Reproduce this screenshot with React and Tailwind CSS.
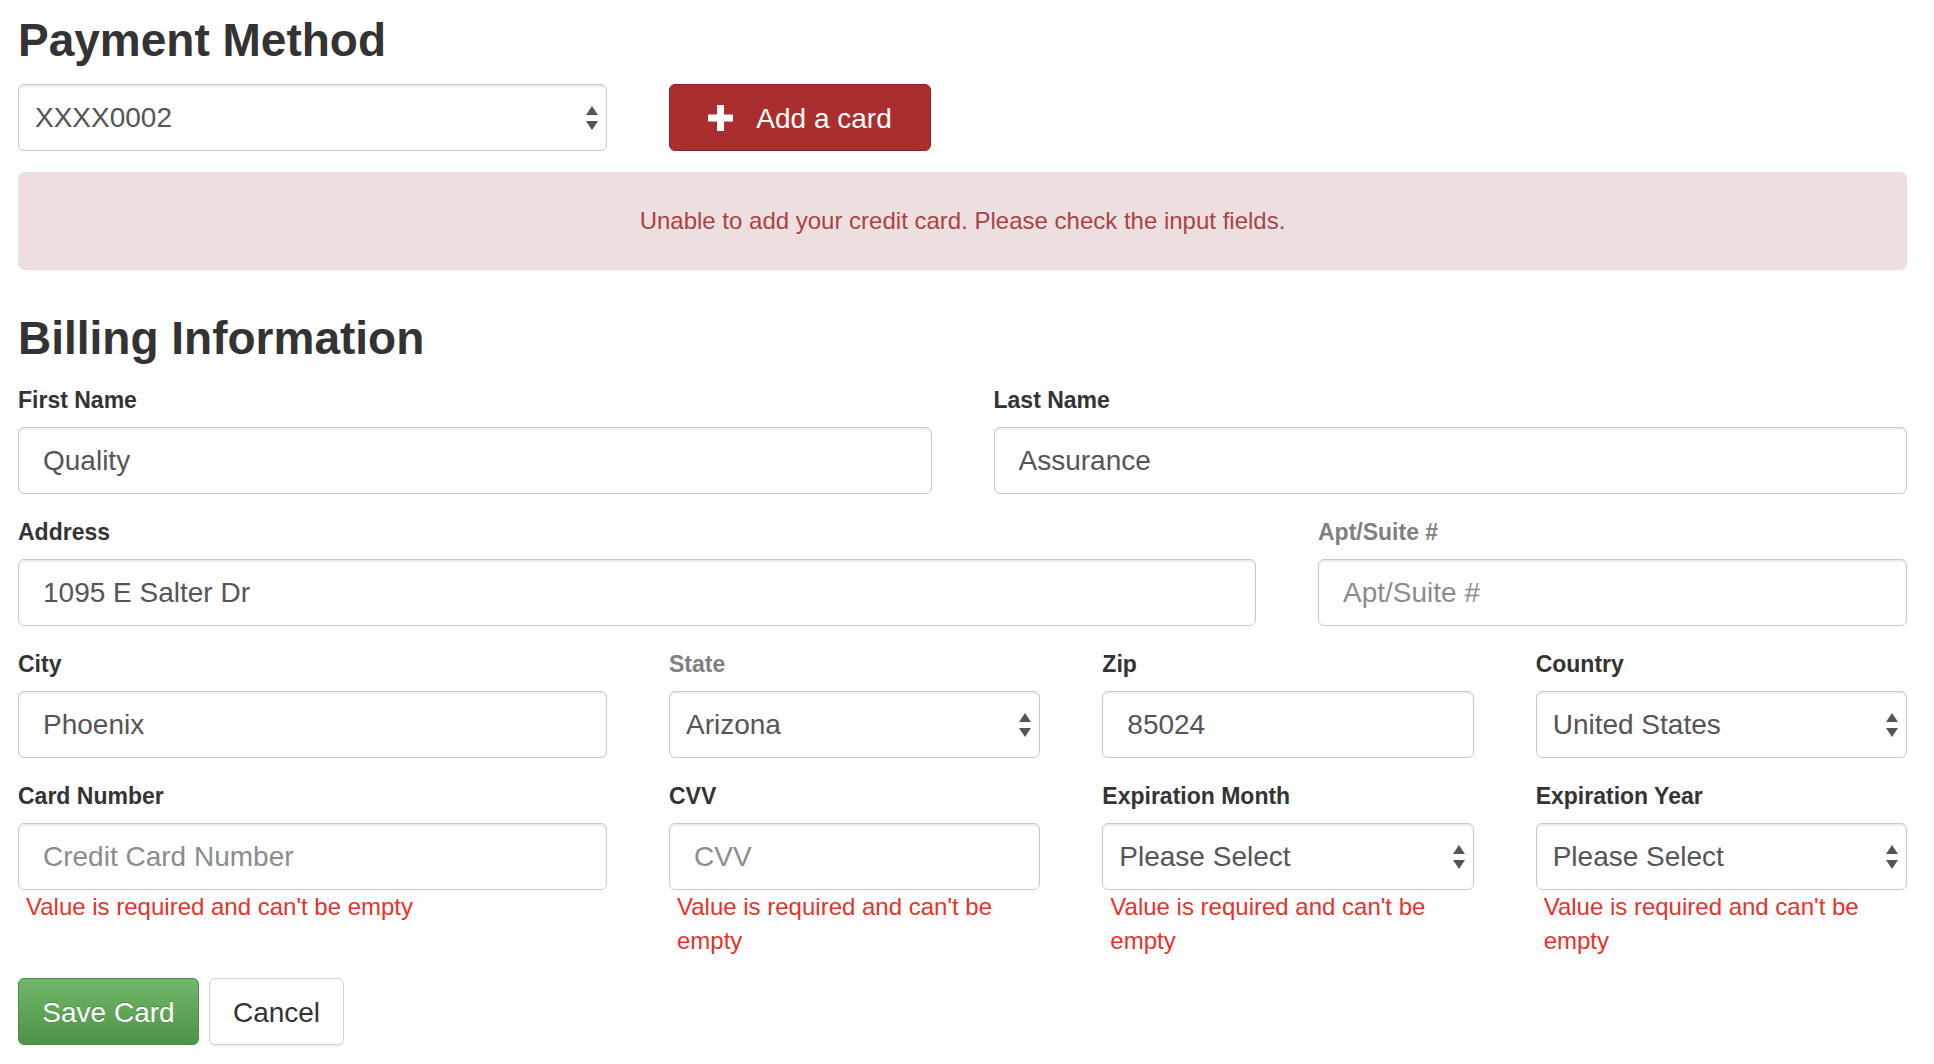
import React from "react";

const FieldLabel = ({ children, muted }) => (
  <label
    className={`mb-[15px] block h-[23px] text-[23px] font-bold leading-none ${
      muted ? "text-[#808080]" : "text-[#333]"
    }`}
  >
    {children}
  </label>
);

const TextInput = ({ value, placeholder }) => (
  <input
    type="text"
    defaultValue={value}
    placeholder={placeholder}
    className="block h-[67px] w-full rounded-[6px] border border-[#c9c9c9] bg-white px-[24px] pt-[1px] text-[28px] text-[#555] shadow-[inset_0_2px_2px_rgba(0,0,0,0.08)] outline-none placeholder:text-[#8c8c8c]"
  />
);

const Arrows = () => (
  <svg
    width="12"
    height="24"
    viewBox="0 0 12 24"
    className="pointer-events-none absolute right-[9px] top-1/2 -translate-y-1/2"
  >
    <path d="M0 9 L6 0 L12 9 Z" fill="#555" />
    <path d="M0 15 L12 15 L6 24 Z" fill="#555" />
  </svg>
);

const SelectInput = ({ value }) => (
  <div className="relative">
    <select
      defaultValue={value}
      className="block h-[67px] w-full appearance-none rounded-[6px] border border-[#c9c9c9] bg-white pl-[16px] pr-[30px] pt-[1px] text-[28px] text-[#555] shadow-[inset_0_2px_2px_rgba(0,0,0,0.08)] outline-none"
    >
      <option value={value}>{value}</option>
    </select>
    <Arrows />
  </div>
);

const FieldError = ({ children }) => (
  <p className="pl-[8px] text-[24px] leading-[34px] text-[#e8322a]">
    {children}
  </p>
);

const REQUIRED = "Value is required and can't be empty";

const App = () => {
  return (
    <div className="min-h-screen bg-white font-['Liberation_Sans',Arial,sans-serif]">
      <div className="ml-[18px] w-[1889px] pt-[17px]">
        <h2 className="h-[46px] text-[46px] font-bold leading-none text-[#333]">
          Payment Method
        </h2>

        <div className="mt-[21px] flex items-center gap-[62px]">
          <div className="w-[589px]">
            <SelectInput value="XXXX0002" />
          </div>
          <button className="flex h-[67px] w-[262px] items-center justify-center gap-[23px] rounded-[6px] border border-[#8d2424] bg-[#ab2e2e] pt-[2px] text-[28px] text-white">
            <svg width="25" height="26" viewBox="0 0 25 26" className="-mt-[2px]">
              <rect x="9" y="0" width="7" height="26" fill="#fff" />
              <rect x="0" y="9.5" width="25" height="7" fill="#fff" />
            </svg>
            Add a card
          </button>
        </div>

        <div className="mt-[21px] flex h-[98px] items-center justify-center rounded-[7px] bg-[#eddfdf] text-[24px] text-[#a94442]">
          Unable to add your credit card. Please check the input fields.
        </div>

        <h2 className="mt-[45px] h-[46px] text-[46px] font-bold leading-none text-[#333]">
          Billing Information
        </h2>

        <div className="mt-[28px] flex flex-col gap-[27px]">
          <div className="grid grid-cols-2 gap-x-[62px]">
            <div>
              <FieldLabel>First Name</FieldLabel>
              <TextInput value="Quality" />
            </div>
            <div>
              <FieldLabel>Last Name</FieldLabel>
              <TextInput value="Assurance" />
            </div>
          </div>

          <div className="grid grid-cols-[1fr_589px] gap-x-[62px]">
            <div>
              <FieldLabel>Address</FieldLabel>
              <TextInput value="1095 E Salter Dr" />
            </div>
            <div>
              <FieldLabel muted>Apt/Suite #</FieldLabel>
              <TextInput placeholder="Apt/Suite #" />
            </div>
          </div>

          <div className="grid grid-cols-[589px_1fr_1fr_1fr] gap-x-[62px]">
            <div>
              <FieldLabel>City</FieldLabel>
              <TextInput value="Phoenix" />
            </div>
            <div>
              <FieldLabel muted>State</FieldLabel>
              <SelectInput value="Arizona" />
            </div>
            <div>
              <FieldLabel>Zip</FieldLabel>
              <TextInput value="85024" />
            </div>
            <div>
              <FieldLabel>Country</FieldLabel>
              <SelectInput value="United States" />
            </div>
          </div>

          <div className="grid grid-cols-[589px_1fr_1fr_1fr] items-start gap-x-[62px]">
            <div>
              <FieldLabel>Card Number</FieldLabel>
              <TextInput placeholder="Credit Card Number" />
              <FieldError>{REQUIRED}</FieldError>
            </div>
            <div>
              <FieldLabel>CVV</FieldLabel>
              <TextInput placeholder="CVV" />
              <FieldError>{REQUIRED}</FieldError>
            </div>
            <div>
              <FieldLabel>Expiration Month</FieldLabel>
              <SelectInput value="Please Select" />
              <FieldError>{REQUIRED}</FieldError>
            </div>
            <div>
              <FieldLabel>Expiration Year</FieldLabel>
              <SelectInput value="Please Select" />
              <FieldError>{REQUIRED}</FieldError>
            </div>
          </div>
        </div>

        <div className="mt-[20px] flex gap-[10px]">
          <button className="h-[67px] w-[181px] rounded-[6px] border border-[#4a8f45] bg-gradient-to-b from-[#72b86a] to-[#4d9347] pt-[2px] text-[28px] text-white [text-shadow:0_-1px_0_rgba(0,0,0,0.2)]">
            Save Card
          </button>
          <button className="h-[67px] w-[135px] rounded-[6px] border border-[#d0d0d0] bg-white pt-[2px] text-[28px] text-[#333] shadow-[0_2px_2px_rgba(0,0,0,0.06)]">
            Cancel
          </button>
        </div>
      </div>
    </div>
  );
};

export default App;
